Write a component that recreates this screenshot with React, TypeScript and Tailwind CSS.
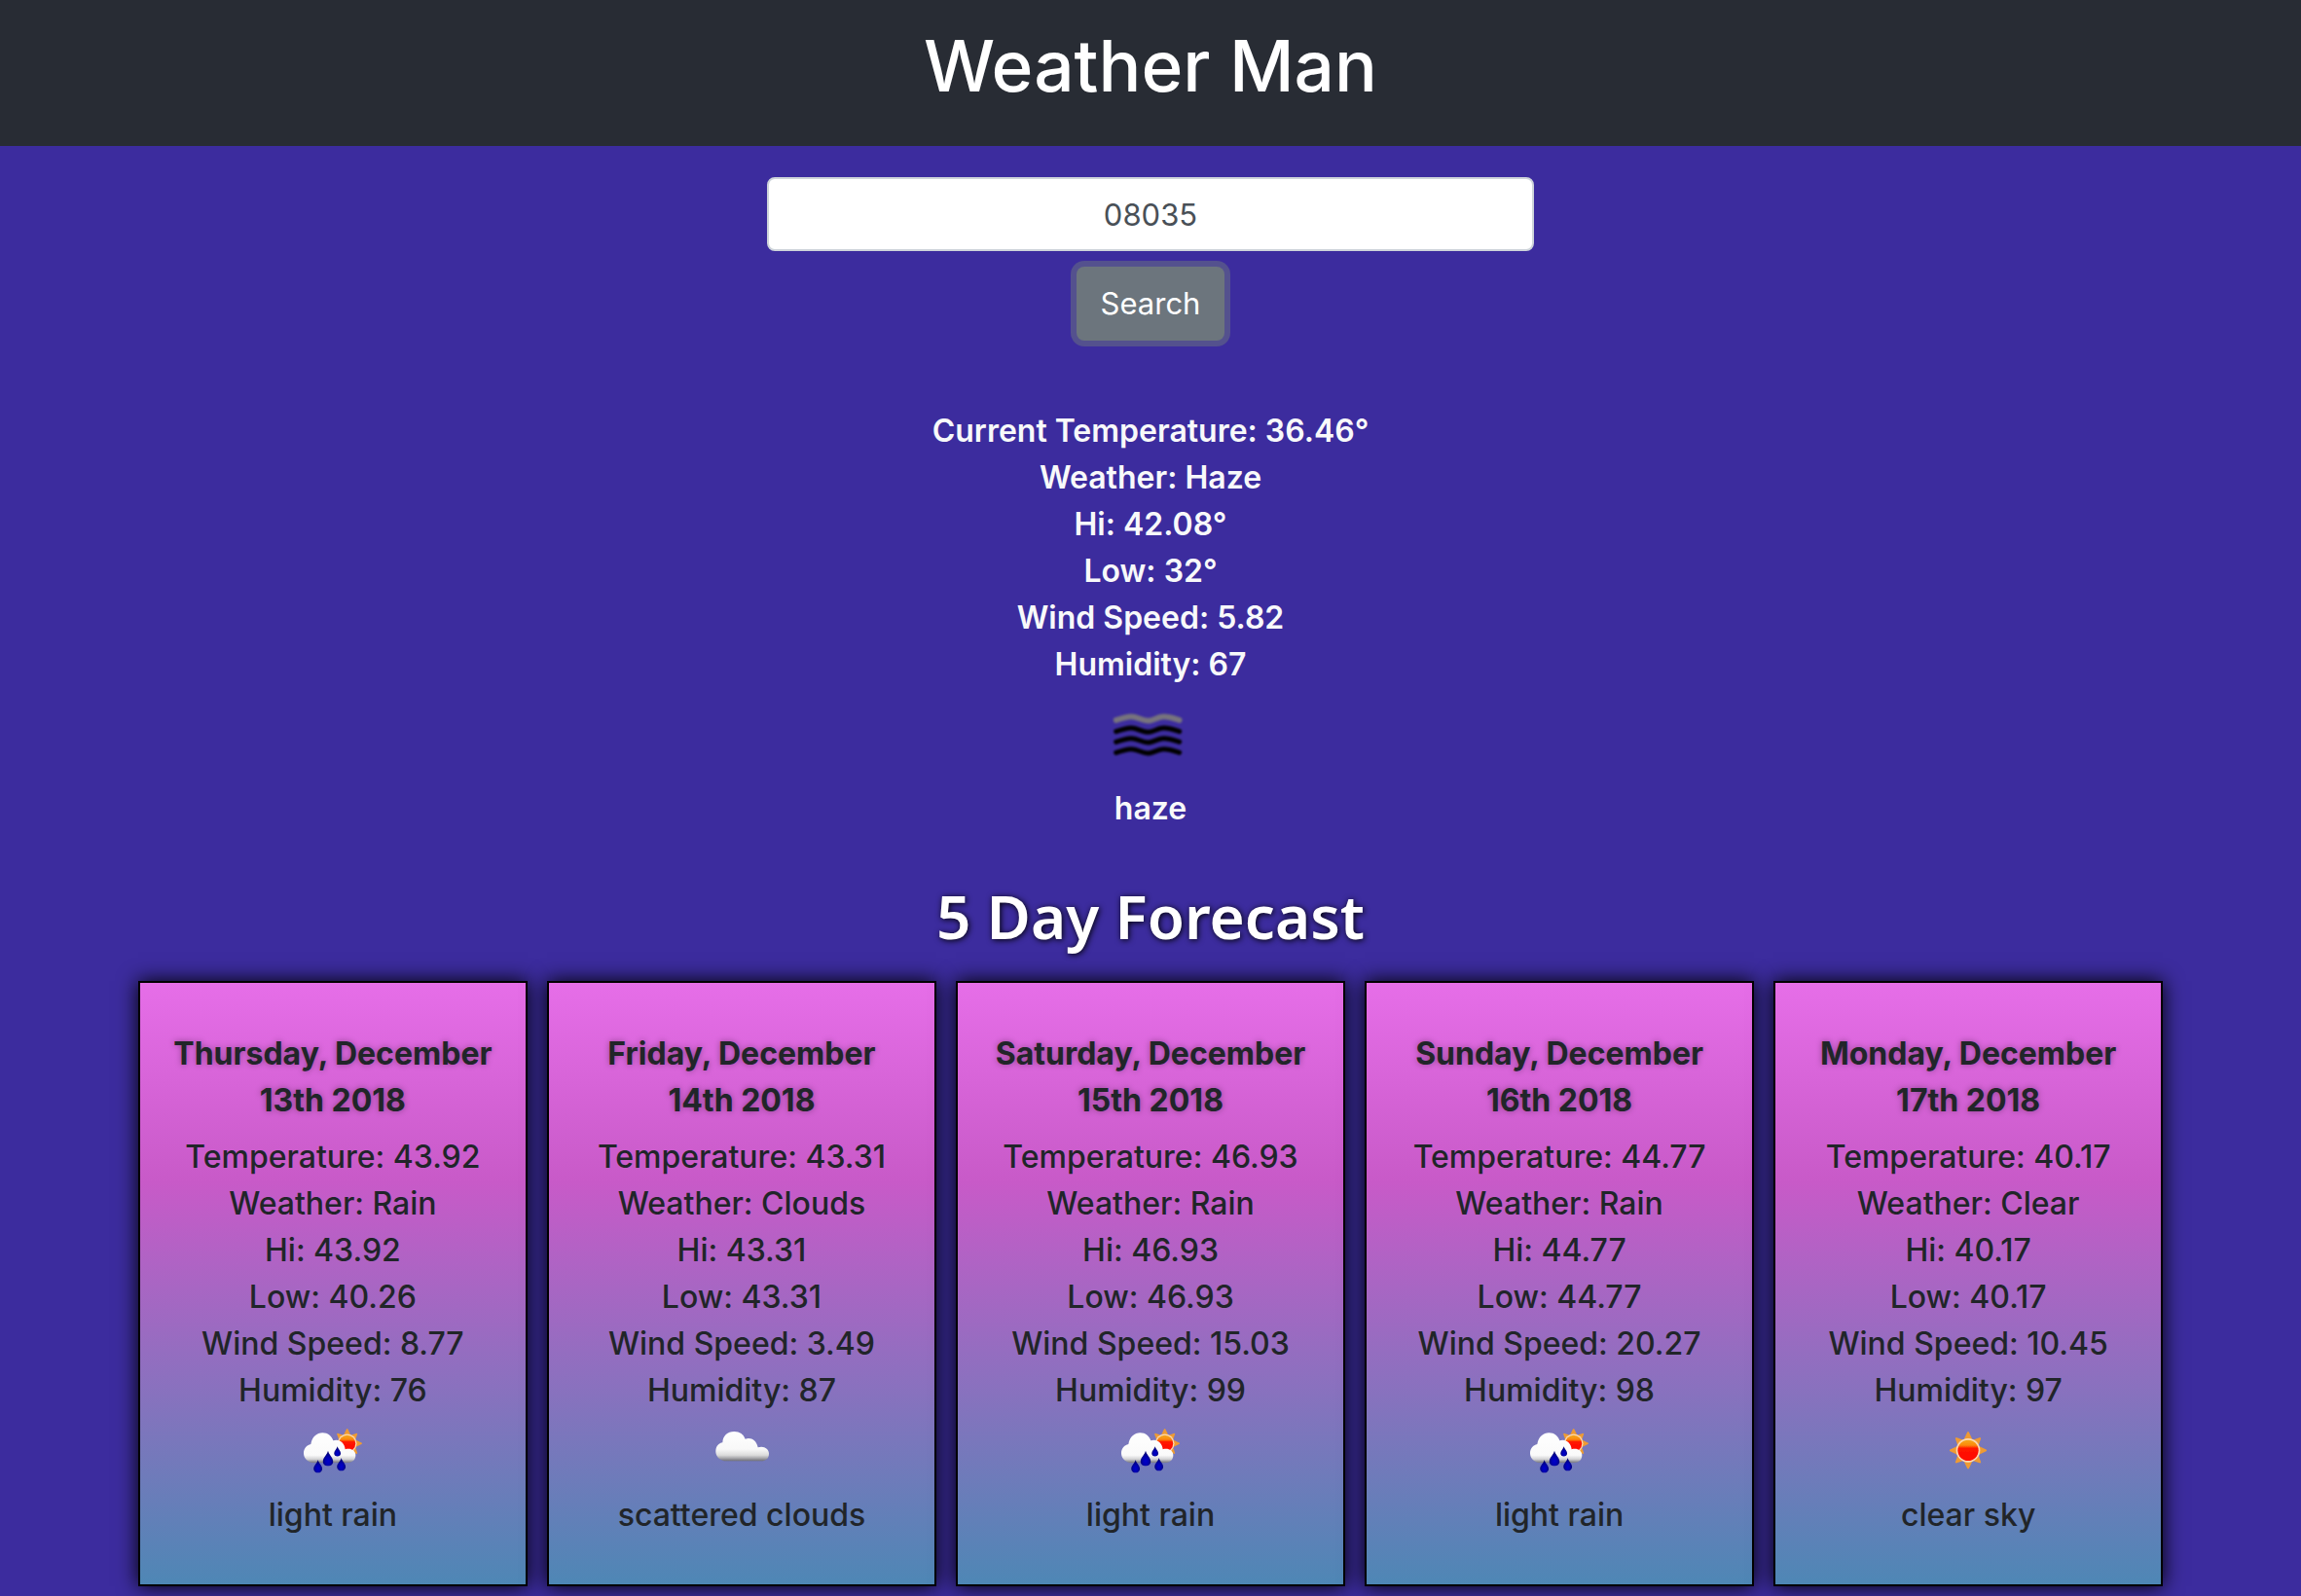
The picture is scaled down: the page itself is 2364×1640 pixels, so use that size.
import type { ReactNode } from "react";

type IconName = "rain" | "clouds" | "clear";

interface Day {
  date: string;
  temperature: string;
  weather: string;
  hi: string;
  low: string;
  wind: string;
  humidity: string;
  icon: IconName;
  description: string;
}

const days: Day[] = [
  { date: "Thursday, December 13th 2018", temperature: "43.92", weather: "Rain", hi: "43.92", low: "40.26", wind: "8.77", humidity: "76", icon: "rain", description: "light rain" },
  { date: "Friday, December 14th 2018", temperature: "43.31", weather: "Clouds", hi: "43.31", low: "43.31", wind: "3.49", humidity: "87", icon: "clouds", description: "scattered clouds" },
  { date: "Saturday, December 15th 2018", temperature: "46.93", weather: "Rain", hi: "46.93", low: "46.93", wind: "15.03", humidity: "99", icon: "rain", description: "light rain" },
  { date: "Sunday, December 16th 2018", temperature: "44.77", weather: "Rain", hi: "44.77", low: "44.77", wind: "20.27", humidity: "98", icon: "rain", description: "light rain" },
  { date: "Monday, December 17th 2018", temperature: "40.17", weather: "Clear", hi: "40.17", low: "40.17", wind: "10.45", humidity: "97", icon: "clear", description: "clear sky" },
];

function Defs() {
  return (
    <svg className="absolute size-0" aria-hidden="true">
      <defs>
        <linearGradient id="cloud" x1="0" y1="0" x2="0" y2="1">
          <stop offset="0" stopColor="#ffffff" />
          <stop offset="0.6" stopColor="#f8f8f8" />
          <stop offset="0.8" stopColor="#dcdcdc" />
          <stop offset="0.9" stopColor="#a8a8ac" />
          <stop offset="1" stopColor="#6c6c74" />
        </linearGradient>
        <linearGradient id="rainCloud" x1="0" y1="0" x2="0" y2="1">
          <stop offset="0" stopColor="#ffffff" />
          <stop offset="0.75" stopColor="#fafafa" />
          <stop offset="0.88" stopColor="#d4d4d6" />
          <stop offset="1" stopColor="#77777f" />
        </linearGradient>
        <linearGradient id="sun" x1="0" y1="0" x2="0" y2="1">
          <stop offset="0" stopColor="#f5a81c" />
          <stop offset="0.25" stopColor="#fb8a0c" />
          <stop offset="0.34" stopColor="#ff4a05" />
          <stop offset="0.4" stopColor="#ff1500" />
          <stop offset="1" stopColor="#ff0800" />
        </linearGradient>
        <radialGradient id="drop" cx="0.5" cy="0.68" r="0.5">
          <stop offset="0" stopColor="#0000cc" />
          <stop offset="0.5" stopColor="#0303b4" />
          <stop offset="1" stopColor="#06067c" />
        </radialGradient>
        <filter id="soft" x="-10%" y="-20%" width="120%" height="140%">
          <feGaussianBlur stdDeviation="1.6" />
        </filter>
        <filter id="softer" x="-10%" y="-20%" width="120%" height="140%">
          <feGaussianBlur stdDeviation="3" />
        </filter>
      </defs>
    </svg>
  );
}

function Sun({ cx, cy }: { cx: number; cy: number }) {
  return (
    <g transform={`translate(${cx} ${cy})`}>
      {[0, 45, 90, 135, 180, 225, 270, 315].map((a) => (
        <path key={a} d="M-14 -32 L-2 -57 L2 -57 L14 -32 Z" fill="#ef9b33" transform={`rotate(${a}) scale(${a % 90 ? 0.95 : 1})`} />
      ))}
      <circle r="37" fill="#fbd9b4" />
      <circle r="32" fill="url(#sun)" />
    </g>
  );
}

function Drop({ x, y, s }: { x: number; y: number; s: number }) {
  return (
    <path
      transform={`translate(${x} ${y}) scale(${s})`}
      d="M0 0 C2 11 16 22 16 33 C16 43 9 48 0 48 C-9 48 -16 43 -16 33 C-16 22 -2 11 0 0 Z"
      fill="url(#drop)"
    />
  );
}

function WeatherIcon({ name }: { name: IconName }) {
  return (
    <svg viewBox="6 -21 240 240" className="size-20" role="img" aria-label={name}>
      <g filter="url(#soft)">
        {name === "clear" && <Sun cx={126} cy={91} />}
        {name === "clouds" && (
          <path
            d="M72 124 C54 120 45 106 46 92 C47 78 55 69 67 67 C68 46 82 33 103 33 C120 33 132 42 137 56 C153 50 171 58 176 82 C194 76 210 86 210 101 C210 114 202 122 190 124 Z"
            fill="url(#cloud)"
          />
        )}
        {name === "rain" && (
          <>
            <g transform="translate(170 70) scale(0.8)">
              <Sun cx={0} cy={0} />
            </g>
            <path
              d="M62 129 C45 126 36 113 36 100 C36 85 45 75 58 72 C62 49 77 37 94 37 C111 37 122 47 127 61 C144 55 162 66 164 88 C180 83 196 91 196 106 C196 120 187 128 174 129 Z"
              fill="url(#rainCloud)"
            />
            <Drop x={111} y={92} s={0.98} />
            <Drop x={140} y={79} s={0.64} />
            <Drop x={80} y={120} s={0.83} />
            <Drop x={152} y={114} s={0.83} />
          </>
        )}
      </g>
    </svg>
  );
}

function HazeIcon() {
  const wave = "M80 0 C94 -5 112 -11 127 -11 C144 -11 160 2 178 2 C194 2 210 -11 227 -11 C244 -11 260 -5 275 0";
  return (
    <svg viewBox="36 -9 300 300" className="size-[100px]" role="img" aria-label="haze">
      <g fill="none" strokeWidth="15" strokeLinecap="round" filter="url(#softer)">
        <path d={wave} transform="translate(0 90)" stroke="#77737d" strokeWidth="17" />
        <path d={wave} transform="translate(0 125)" stroke="#000000" />
        <path d={wave} transform="translate(0 157)" stroke="#000000" />
        <path d={wave} transform="translate(0 190)" stroke="#000000" />
      </g>
    </svg>
  );
}

function Line({ children }: { children: ReactNode }) {
  return <p>{children}</p>;
}

function DayCard({ day }: { day: Day }) {
  return (
    <article className="flex min-w-0 flex-1 flex-col items-center border-2 border-black bg-[linear-gradient(#e66ee8,#c85ac8_33%,#4e87b5)] px-7 pt-[49px] pb-[47px] text-center font-medium text-[#212529] shadow-[0_0_20px_#000]">
      <h3 className="mb-2.5 font-bold [text-shadow:0_0_6px_rgba(0,0,0,0.35)]">{day.date}</h3>
      <Line>Temperature: {day.temperature}</Line>
      <Line>Weather: {day.weather}</Line>
      <Line>Hi: {day.hi}</Line>
      <Line>Low: {day.low}</Line>
      <Line>Wind Speed: {day.wind}</Line>
      <Line>Humidity: {day.humidity}</Line>
      <WeatherIcon name={day.icon} />
      <Line>{day.description}</Line>
    </article>
  );
}

export default function App() {
  return (
    <div className="min-h-screen bg-[#3c2c9e] pb-2.5 font-[Inter,sans-serif] text-[32px] leading-[48px]">
      <Defs />
      <header className="bg-[#282c34] pt-5 pb-[34px] text-center">
        <h1 className="text-[73px] leading-[96px] font-medium text-white">Weather Man</h1>
      </header>
      <form className="flex flex-col items-center gap-4 pt-8 text-[31px]" onSubmit={(e) => e.preventDefault()}>
        <input
          type="text"
          aria-label="Zip code"
          defaultValue="08035"
          className="h-[76px] w-1/3 rounded-lg border-2 border-[#ced4da] bg-white text-center text-[#495057] outline-none"
        />
        <button type="submit" className="h-[76px] rounded-lg bg-[#6c757d] px-[25px] text-white ring-6 ring-[#6c757d]/50">
          Search
        </button>
      </form>
      <section className="mt-[69px] flex flex-col items-center text-center font-semibold text-[#f8f9fa]">
        <Line>Current Temperature: 36.46°</Line>
        <Line>Weather: Haze</Line>
        <Line>Hi: 42.08°</Line>
        <Line>Low: 32°</Line>
        <Line>Wind Speed: 5.82</Line>
        <Line>Humidity: 67</Line>
        <HazeIcon />
        <Line>haze</Line>
      </section>
      <section className="mt-12">
        <h2 className="text-center font-['Noto_Sans',sans-serif] text-[62px] leading-[77px] font-semibold text-white [text-shadow:1px_1px_6px_#000]">
          5 Day Forecast
        </h2>
        <div className="mx-auto mt-7 flex w-[88%] gap-5">
          {days.map((day) => (
            <DayCard key={day.date} day={day} />
          ))}
        </div>
      </section>
    </div>
  );
}
